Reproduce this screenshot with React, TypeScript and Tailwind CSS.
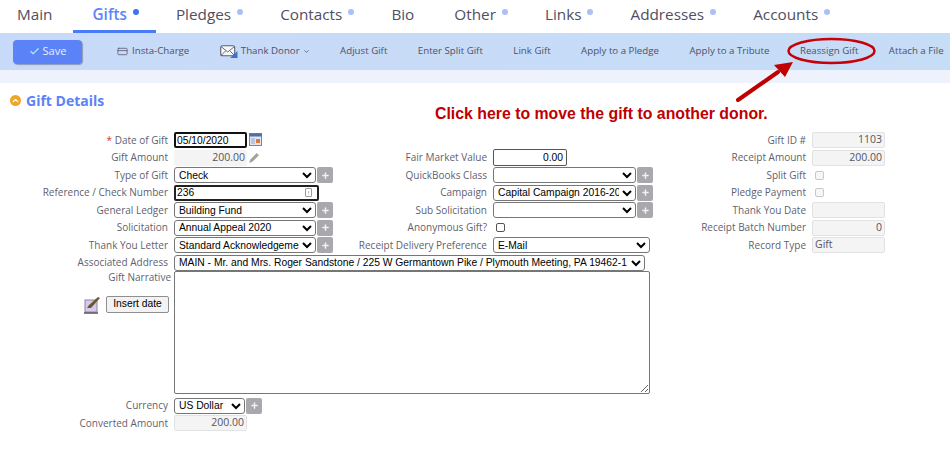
import type { ReactNode } from 'react';
import { Check, ChevronDown, ChevronUp, CreditCard, Plus } from 'lucide-react';

const tabs = [
  { name: 'Main', dot: false },
  { name: 'Gifts', dot: true, active: true },
  { name: 'Pledges', dot: true },
  { name: 'Contacts', dot: true },
  { name: 'Bio', dot: false },
  { name: 'Other', dot: true },
  { name: 'Links', dot: true },
  { name: 'Addresses', dot: true },
  { name: 'Accounts', dot: true },
];

const sans = "font-['Open_Sans',sans-serif]";
const arial = "font-['Liberation_Sans',Arial,sans-serif]";

function Row({ label, width, children }: { label: ReactNode; width: string; children?: ReactNode }) {
  return (
    <div className="flex h-[17.5px] items-center gap-[6px]">
      <label className={`${width} shrink-0 whitespace-nowrap text-right text-[10px] text-[#5f5f70]`}>{label}</label>
      {children}
    </div>
  );
}

function AddButton() {
  return (
    <span className="ml-px flex h-[16px] w-[16px] shrink-0 items-center justify-center rounded-[2px] bg-[#a9a9ad]">
      <Plus size={9} strokeWidth={4} className="text-[#f1f1f4]" />
    </span>
  );
}

function Select({ value, width, add = true }: { value: string; width: string; add?: boolean }) {
  return (
    <div className="flex items-center">
      <select
        defaultValue={value}
        className={`${width} ${arial} h-[16px] rounded-[3px] border border-[#767676] bg-white text-[10.3px] leading-none text-black`}
      >
        <option>{value}</option>
      </select>
      {add && <AddButton />}
    </div>
  );
}

function ReadOnly({ value, left = false }: { value?: string; left?: boolean }) {
  return (
    <div
      className={`flex h-[16px] w-[73px] items-center rounded-[2px] border border-[#e2e2e2] bg-[#f4f4f4] px-[2px] text-[10.5px] text-[#55555f] ${left ? 'justify-start' : 'justify-end'}`}
    >
      {value}
    </div>
  );
}

function FadedCheck() {
  return <span className="ml-[3px] h-[9px] w-[9px] rounded-[2px] border border-[#c9c9c9] bg-[#f6f6f6]" />;
}

export default function App() {
  return (
    <div className={`${sans} relative h-[453px] w-[950px] overflow-hidden bg-white`}>
      <nav className="flex h-[33px]">
        {tabs.map((tab, i) => (
          <div
            key={tab.name}
            className={`relative flex shrink-0 items-center border-b-[3px] pb-[1px] text-[15.3px] ${i === 0 ? 'pl-[17px] pr-5' : 'px-5'} ${tab.active ? 'border-[#4a7cf7] font-semibold text-[#5a86f6]' : 'border-transparent font-medium text-[#4f4f63]'}`}
          >
            <span>{tab.name}</span>
            {tab.dot && (
              <span className="relative ml-[9px] w-0">
                <span className={`absolute -left-[3px] -top-[6px] h-[6px] w-[6px] rounded-full ${tab.active ? 'bg-[#3f73f2]' : 'bg-[#a9c1f8]'}`} />
              </span>
            )}
          </div>
        ))}
      </nav>

      <div className="flex h-[37px] items-center bg-gradient-to-r from-[#c8daf9] to-[#c6ddf6] pl-[13px] text-[9.7px] font-medium text-[#4f5068]">
        <button className="flex h-[24px] w-[69px] shrink-0 items-center justify-center gap-[3px] rounded-[4px] bg-[#5b82f6] text-[11px] text-[#eaf0ff] shadow-[1px_1px_1px_#8f9bb5]">
          <Check size={11} strokeWidth={3} className="text-[#a8e0f5]" />
          Save
        </button>
        <div className="ml-[35px] flex items-center gap-[30.5px] whitespace-nowrap">
          <span className="flex items-center gap-[4px]">
            <CreditCard size={11} strokeWidth={1.6} />
            Insta-Charge
          </span>
          <span className="flex items-center gap-[3px]">
            <svg width="18" height="13" viewBox="0 0 18 13">
              <rect x="0.7" y="0.7" width="14" height="10" rx="2" fill="#f5f7fb" stroke="#5d6270" strokeWidth="1.1" />
              <path d="M1 1.5 L7.7 7 L14.5 1.5 M1 10.5 L6 5.5 M14.5 10.5 L9.5 5.5" fill="none" stroke="#5d6270" strokeWidth="0.9" />
              <path d="M10 13 L17.5 13 L17.5 6 Z" fill="#3f74c9" />
            </svg>
            Thank Donor
            <ChevronDown size={7} strokeWidth={2.5} />
          </span>
          <span>Adjust Gift</span>
          <span>Enter Split Gift</span>
          <span>Link Gift</span>
          <span>Apply to a Pledge</span>
          <span>Apply to a Tribute</span>
          <span>Reassign Gift</span>
          <span>Attach a File</span>
        </div>
      </div>
      <div className="h-[13px] bg-[#eef2fc]" />

      <h2 className="flex h-[35px] items-center gap-[5px] pl-[10px] text-[14px] font-bold text-[#5b82f6]">
        <span className="flex h-[11px] w-[11px] items-center justify-center rounded-full bg-[#eea62a]">
          <ChevronUp size={9} strokeWidth={3.5} className="text-white" />
        </span>
        Gift Details
      </h2>

      <form className="pt-[13.5px]">
        <div className="grid grid-cols-[340px_319px_1fr]">
          <div>
            <Row width="w-[168px]" label={<><span className="text-[#d0342c]">* </span>Date of Gift</>}>
              <div className="flex items-center gap-[2px]">
                <div className={`${arial} flex h-[16px] w-[73px] items-center rounded-[2px] border-2 border-[#111] px-[1px] text-[10.3px] text-black`}>
                  05/10/2020
                </div>
                <svg width="13" height="13" viewBox="0 0 13 13" className="-mt-[2px]">
                  <rect x="0.5" y="0.5" width="12" height="12" fill="#dfe7f6" stroke="#6d86b5" />
                  <rect x="0.5" y="0.5" width="12" height="3" fill="#4d6fa8" />
                  <rect x="7" y="6" width="4" height="4" fill="#e0783a" />
                  <path d="M2 6h4M2 8h4M2 10h4" stroke="#8fa6cd" />
                </svg>
              </div>
            </Row>
            <Row width="w-[168px]" label="Gift Amount">
              <div className="flex items-center gap-[1px]">
                <div className="flex h-[16px] w-[73px] items-center justify-end rounded-[2px] bg-[#f4f4f4] px-[2px] text-[10.5px] text-[#55555f]">200.00</div>
                <svg width="12" height="12" viewBox="0 0 11 11">
                  <path d="M1 10 L2 7 L8 1 L10 3 L4 9 Z" fill="#a3a3a3" />
                </svg>
              </div>
            </Row>
            <Row width="w-[168px]" label="Type of Gift"><Select value="Check" width="w-[142px]" /></Row>
            <Row width="w-[168px]" label="Reference / Check Number">
              <div className={`${arial} flex h-[16px] w-[145px] items-center justify-between rounded-[2px] border-2 border-[#222] px-[1px] pr-[5px] text-[10.3px] text-black`}>
                236
                <span className="flex h-[9px] w-[7px] items-center justify-center rounded-[1px] border border-[#999] text-[6px] leading-none text-[#888]">!</span>
              </div>
            </Row>
            <Row width="w-[168px]" label="General Ledger"><Select value="Building Fund" width="w-[142px]" /></Row>
            <Row width="w-[168px]" label="Solicitation"><Select value="Annual Appeal 2020" width="w-[142px]" /></Row>
            <Row width="w-[168px]" label="Thank You Letter"><Select value="Standard Acknowledgement" width="w-[142px]" /></Row>
          </div>

          <div>
            <div className="h-[17.5px]" />
            <Row width="w-[147px]" label="Fair Market Value">
              <div className={`${arial} flex h-[17px] w-[74px] items-center justify-end rounded-[2px] border border-[#555] px-[3px] text-[10.3px] text-black`}>0.00</div>
            </Row>
            <Row width="w-[147px]" label="QuickBooks Class"><Select value="" width="w-[143px]" /></Row>
            <Row width="w-[147px]" label="Campaign"><Select value="Capital Campaign 2016-2020" width="w-[143px]" /></Row>
            <Row width="w-[147px]" label="Sub Solicitation"><Select value="" width="w-[143px]" /></Row>
            <Row width="w-[147px]" label="Anonymous Gift?">
              <span className="ml-[3px] h-[9px] w-[9px] rounded-[2px] border border-[#555]" />
            </Row>
            <Row width="w-[147px]" label="Receipt Delivery Preference"><Select value="E-Mail" width="w-[157px]" add={false} /></Row>
          </div>

          <div>
            <Row width="w-[147px]" label="Gift ID #"><ReadOnly value="1103" /></Row>
            <Row width="w-[147px]" label="Receipt Amount"><ReadOnly value="200.00" /></Row>
            <Row width="w-[147px]" label="Split Gift"><FadedCheck /></Row>
            <Row width="w-[147px]" label="Pledge Payment"><FadedCheck /></Row>
            <Row width="w-[147px]" label="Thank You Date"><ReadOnly /></Row>
            <Row width="w-[147px]" label="Receipt Batch Number"><ReadOnly value="0" /></Row>
            <Row width="w-[147px]" label="Record Type"><ReadOnly value="Gift" left /></Row>
          </div>
        </div>

        <Row width="w-[168px]" label="Associated Address">
          <Select value="MAIN - Mr. and Mrs. Roger Sandstone / 225 W Germantown Pike / Plymouth Meeting, PA 19462-1" width="w-[471px]" add={false} />
        </Row>

        <div className="-mt-px flex">
          <div className="flex w-[174px] shrink-0 flex-col items-end text-[10px] text-[#5f5f70]">
            <span className="mr-[3px] -mt-px">Gift Narrative</span>
            <div className="mr-[5px] mt-[11px] flex items-center gap-[3px]">
              <svg width="19" height="18" viewBox="0 0 19 18">
                <rect x="1" y="4" width="12" height="12" fill="#d9c9ef" stroke="#8a86a6" />
                <path d="M3 12 L5 9 L14 1 L16 2 L7 12 Z" fill="#6b5a2e" />
                <path d="M0 17 H14" stroke="#555" strokeWidth="1.5" />
              </svg>
              <button type="button" className={`${arial} h-[17px] w-[63px] rounded-[2px] border border-[#8f8f8f] bg-[#f3f3f3] text-[10.3px] leading-none text-black`}>
                Insert date
              </button>
            </div>
          </div>
          <textarea className="h-[123px] w-[476px] rounded-[2px] border border-[#767676]" />
        </div>

        <div className="pt-[3.5px]">
          <Row width="w-[168px]" label="Currency"><Select value="US Dollar" width="w-[71px]" /></Row>
          <Row width="w-[168px]" label="Converted Amount"><ReadOnly value="200.00" /></Row>
        </div>
      </form>

      <div className={`${arial} absolute left-[435px] top-[102px] whitespace-nowrap text-[15.85px] font-bold text-[#c00000]`}>
        Click here to move the gift to another donor.
      </div>
      <svg width="950" height="453" className="pointer-events-none absolute left-0 top-0">
        <ellipse cx="831.5" cy="51" rx="43" ry="12" fill="none" stroke="#c8000a" strokeWidth="2.5" />
        <path d="M738 100 L778 72" stroke="#c00000" strokeWidth="4" strokeLinecap="round" />
        <path d="M793 62 L774 65 L785 77 Z" fill="#c00000" />
      </svg>
    </div>
  );
}
